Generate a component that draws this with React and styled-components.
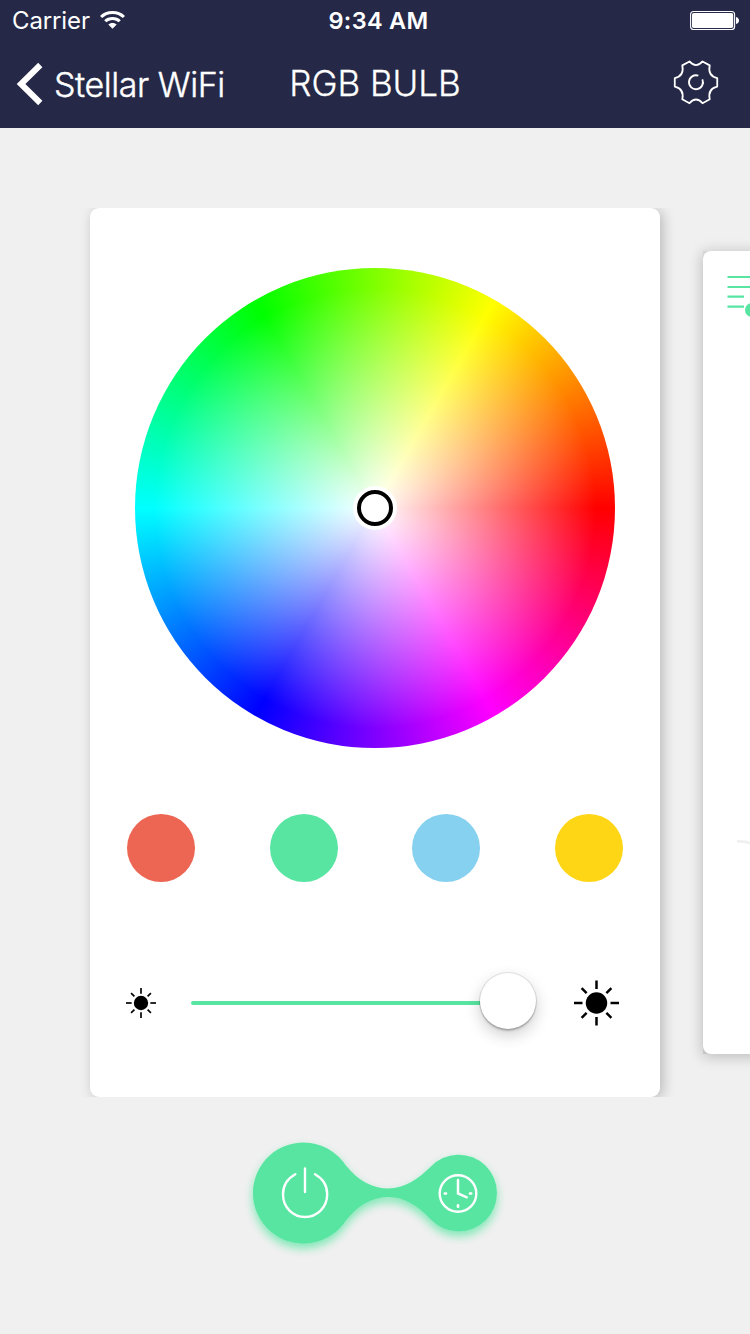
import React from 'react';
import styled, { createGlobalStyle } from 'styled-components';

const GlobalStyle = createGlobalStyle`
  * { box-sizing: border-box; }
  body { margin: 0; background: #f0f0f0; }
`;

const Screen = styled.div`
  width: 750px;
  height: 1334px;
  overflow: hidden;
  display: flex;
  flex-direction: column;
  background: #f0f0f0;
  font-family: Inter, "Liberation Sans", sans-serif;
`;

const Header = styled.header`
  height: 128px;
  flex: none;
  background: #252947;
  color: #fff;
`;

const StatusBar = styled.div`
  height: 40px;
  padding: 0 11px 0 12px;
  display: grid;
  grid-template-columns: 1fr auto 1fr;
  align-items: center;
  font-size: 24px;
  line-height: 40px;
`;

const Carrier = styled.div`
  display: flex;
  align-items: center;
  gap: 10px;
  letter-spacing: -0.12px;

  span { padding-top: 2px; line-height: 38px; }
`;

const Clock = styled.div`
  padding: 2px 0 0 6px;
  line-height: 38px;
  font-weight: 600;
  font-size: 23.5px;
  letter-spacing: 0.3px;
`;

const BatterySlot = styled.div`
  display: flex;
  justify-content: flex-end;
`;

const NavBar = styled.nav`
  height: 88px;
  padding: 0 16px;
  display: grid;
  grid-template-columns: 1fr auto 1fr;
  align-items: center;
  font-size: 34px;
  line-height: 44px;
`;

const BackButton = styled.div`
  display: flex;
  align-items: center;
  gap: 10px;
  white-space: nowrap;
  font-weight: 300;
  letter-spacing: -0.45px;
  -webkit-text-stroke: 0.4px #fff;

  span { padding-top: 1px; }
`;

const Title = styled.h1`
  margin: 0 0 2px;
  font-size: 35px;
  font-weight: 300;
  letter-spacing: -0.05px;
  -webkit-text-stroke: 0.3px #fff;
  white-space: nowrap;
`;

const SettingsButton = styled.div`
  display: flex;
  justify-content: flex-end;
  padding: 0 15px 4px 0;
`;

const Carousel = styled.main`
  margin-top: 80px;
  padding-left: 90px;
  display: flex;
  gap: 43px;
  align-items: center;
  flex: none;
`;

const Card = styled.section`
  width: 570px;
  height: 889px;
  flex: none;
  padding: 60px 37px 0;
  border-radius: 9px;
  background: #fff;
  box-shadow: 3px 2px 13px rgba(0, 0, 0, 0.23);
  clip-path: inset(0 -20px);
`;

const NextCardEdge = styled.section`
  width: 513px;
  height: 803px;
  flex: none;
  background: linear-gradient(#d6d6d6, #c6c6c6);
  box-shadow: 0 2px 14px rgba(0, 0, 0, 0.24);
`;

const NextCard = styled.div`
  height: 100%;
  padding: 24px 24px 0;
  border-radius: 8px;
  background: #fff;
  display: flex;
  flex-direction: column;
`;

const DialHint = styled.svg`
  margin: 518px 0 0 9px;
`;

const Wheel = styled.div`
  width: 480px;
  height: 480px;
  margin: 0 auto;
  border-radius: 50%;
  display: flex;
  align-items: center;
  justify-content: center;
  background:
    radial-gradient(circle closest-side, #fff 0%, rgba(255, 255, 255, 0) 92%),
    conic-gradient(from 90deg, #f00, #f0f, #00f, #0ff, #0f0, #ff0, #f00);
`;

const Picker = styled.div`
  width: 36px;
  height: 36px;
  border: 4px solid #000;
  border-radius: 50%;
  background: #fff;
  box-shadow: 0 0 0 4px #fff;
`;

const Swatches = styled.div`
  margin-top: 66px;
  display: flex;
  justify-content: space-between;
`;

const Swatch = styled.div`
  width: 68px;
  height: 68px;
  border-radius: 50%;
  background: ${(p) => p.$color};
`;

const Brightness = styled.div`
  height: 58px;
  margin: 92px 0 0 -1px;
  display: flex;
  align-items: center;
`;

const Slider = styled.div`
  width: 345px;
  margin: 0 38px 0 35px;
  height: 58px;
  display: flex;
  align-items: center;
`;

const Track = styled.div`
  flex: 1;
  height: 4px;
  border-radius: 2px 0 0 2px;
  background: #57e5a1;
`;

const Knob = styled.div`
  width: 56px;
  height: 56px;
  margin-bottom: 4px;
  border-radius: 50%;
  background: #fff;
  box-shadow: 0 0 0 1px rgba(0, 0, 0, 0.09), 0 2px 2px rgba(0, 0, 0, 0.2), 0 6px 16px rgba(0, 0, 0, 0.2);
`;

const Footer = styled.footer`
  margin-top: 33px;
  display: flex;
  justify-content: center;
`;

const ActionShape = styled.svg`
  display: block;
  path.blob {
    filter: drop-shadow(0 5px 5px rgba(87, 229, 161, 0.75));
  }
`;

const Wifi = () => (
  <svg width="25" height="18" viewBox="0 0 25 18" fill="#fff">
    <path d="M12.5 0C17.6 0 22 1.900 25 4.900L22.800 7.100C20.200 4.600 16.600 3 12.500 3S4.800 4.600 2.200 7.100L0 4.900C3 1.900 7.400 0 12.500 0Z" />
    <path d="M12.5 6C15.800 6 18.700 7.200 20.800 9.200L18.600 11.300C17.100 9.800 15 8.900 12.500 8.900S7.900 9.800 6.400 11.300L4.200 9.200C6.300 7.200 9.200 6 12.500 6Z" />
    <path d="M12.5 12C14.200 12 15.700 12.600 16.700 13.500L12.500 17.800L8.300 13.500C9.300 12.600 10.800 12 12.500 12Z" />
  </svg>
);

const Battery = () => (
  <svg width="49" height="20" viewBox="0 0 49 20">
    <rect x="0.600" y="1.500" width="44" height="18" rx="3" fill="none" stroke="#fff" strokeWidth="1.100" />
    <rect x="2" y="2.900" width="41.200" height="15.200" rx="1.800" fill="#fff" />
    <path d="M46 7Q49 8 49 10.500T46 14Z" fill="#fff" />
  </svg>
);

const Chevron = () => (
  <svg width="28" height="44" viewBox="0 0 28 44">
    <path d="M24.300 3L5 22L24.300 41" fill="none" stroke="#fff" strokeWidth="6" />
  </svg>
);

const Gear = () => (
  <svg width="46" height="46" viewBox="0 -1 138 138" fill="none" stroke="#fff" strokeWidth="5.500" strokeLinejoin="round">
    <path
      transform="translate(1.400 1.400) scale(0.98)"
      d="M49 5Q69 28 89 5L111 17Q104 49 134 56V82Q104 89 111 121L89 133Q69 110 49 133L27 121Q34 89 4 82V56Q34 49 27 17Z"
    />
    <path d="M76 49A21 21 0 1 0 88 60" />
  </svg>
);

const Sun = ({ width, height, stroke = 5 }) => (
  <svg width={width} height={height} viewBox="0 0 90 90">
    <circle cx="45" cy="45" r="21.500" />
    <g stroke="#000" strokeWidth={stroke}>
      {[0, 90, 180, 270].map((a) => (
        <path key={a} d="M45 0V17" transform={`rotate(${a} 45 45)`} />
      ))}
      {[45, 135, 225, 315].map((a) => (
        <path key={a} d="M45 3V17" transform={`rotate(${a} 45 45)`} />
      ))}
    </g>
  </svg>
);

const ListIcon = () => (
  <svg width="48" height="42" viewBox="0 0 48 42">
    <path d="M0.500 2H40M0.500 12H40M0.500 21.700H17M0.500 31.700H17" stroke="#57e5a1" strokeWidth="2.200" />
    <circle cx="25" cy="35" r="7" fill="#57e5a1" />
  </svg>
);

const Actions = () => (
  <ActionShape width="290" height="140" viewBox="230 1130 290 140">
    <path
      className="blob"
      fill="#57e5a1"
      d="M345.500 1165C358 1181 373 1188.500 388 1188.500C405 1188.500 418 1179 430.500 1167A38.300 38.300 0 1 1 430.500 1219C418 1206 405 1197 388 1197C371 1197 357 1206 345.500 1221A50.500 50.500 0 1 1 345.500 1165Z"
    />
    <g fill="none" stroke="#fff" strokeWidth="2.400" strokeLinecap="round">
      <path d="M305 1168.500V1192M295.300 1174.200C287.500 1178.500 283 1186 283 1194.300C283 1207.500 293 1217 305 1217S327.200 1207.500 327.200 1194.300C327.200 1186 322.800 1178.500 315 1174.200" />
      <circle cx="458" cy="1193.500" r="18.300" />
      <path d="M458 1180V1193.500L466.800 1197.300" strokeWidth="2.500" />
      <path d="M444.800 1193.500H446M470 1193.500H471.200M458 1205.300V1206.700" strokeWidth="2.700" />
    </g>
  </ActionShape>
);

const PRESETS = ['#ed6553', '#57e5a1', '#86d0f0', '#ffd615'];

export default function App() {
  return (
    <>
      <GlobalStyle />
      <Screen>
        <Header>
          <StatusBar>
            <Carrier>
              <span>Carrier</span>
              <Wifi />
            </Carrier>
            <Clock>9:34 AM</Clock>
            <BatterySlot>
              <Battery />
            </BatterySlot>
          </StatusBar>
          <NavBar>
            <BackButton>
              <Chevron />
              <span>Stellar WiFi</span>
            </BackButton>
            <Title>RGB BULB</Title>
            <SettingsButton>
              <Gear />
            </SettingsButton>
          </NavBar>
        </Header>
        <Carousel>
          <Card>
            <Wheel>
              <Picker />
            </Wheel>
            <Swatches>
              {PRESETS.map((c) => (
                <Swatch key={c} $color={c} />
              ))}
            </Swatches>
            <Brightness>
              <Sun width={30} height={30} />
              <Slider>
                <Track />
                <Knob />
              </Slider>
              <Sun width={45} height={46} />
            </Brightness>
          </Card>
          <NextCardEdge>
            <NextCard>
              <ListIcon />
              <DialHint width="60" height="40" viewBox="0 0 60 40">
                <path d="M1 6.500Q9 5.500 16 9" fill="none" stroke="#f0f0f0" strokeWidth="2.800" />
              </DialHint>
            </NextCard>
          </NextCardEdge>
        </Carousel>
        <Footer>
          <Actions />
        </Footer>
      </Screen>
    </>
  );
}
